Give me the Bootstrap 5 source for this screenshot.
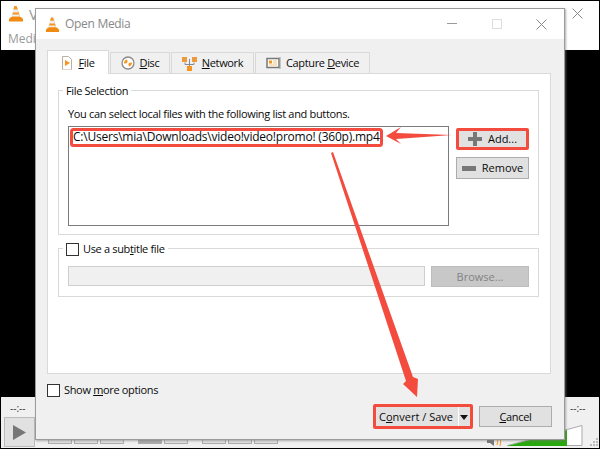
<!DOCTYPE html>
<html lang="en">
<head>
<meta charset="utf-8">
<title>Open Media</title>
<link rel="stylesheet" href="https://cdn.jsdelivr.net/npm/bootstrap@5.3.0/dist/css/bootstrap.min.css">
<style>
html,body{margin:0;width:600px;height:449px;overflow:hidden;background:#000}
body{position:relative;font-family:"Open Sans","Noto Sans",sans-serif;font-size:11px;letter-spacing:-.33px;line-height:16px;color:#0a0a0a}
u{text-underline-offset:1px}
.backtop{position:absolute;left:1px;top:1px;width:598px;height:49px;background:#fff;color:#999;letter-spacing:0}
.backtop .cone1{position:absolute;left:7px;top:4px}
.backtop .ttl{position:absolute;left:28px;top:5px;font-size:15px}
.backtop .menu{position:absolute;left:7px;top:30px;font-size:12px}
.backtop .cls{position:absolute;left:571px;top:7px}
.backbot{position:absolute;left:1px;top:397px;width:598px;height:51px;background:#f0f0f0;color:#333;letter-spacing:0}
.backbot .t1{position:absolute;left:9px;top:3px;font-size:10px}
.backbot .t2{position:absolute;left:569px;top:3px;font-size:10px}
.playb{position:absolute;left:3px;top:20px;width:31px;height:30px;background:#e1e1e1;border:1px solid #bbb;display:flex;align-items:center;justify-content:center}
.minib{position:absolute;top:42px;width:24px;height:5px;background:#e1e1e1;border:1px solid #adadad}
.vol{position:absolute;left:506px;top:28px}
.spk{position:absolute;left:486px;top:40px}
.grip{position:absolute;left:589px;top:41px}
.dlg{position:absolute;left:35px;top:8px;width:530px;height:432px;background:#f0f0f0;border:1px solid #9a9a9a;box-shadow:1px 1px 2px rgba(120,120,120,.6);display:flex;flex-direction:column}
.dlg-title{height:30px;background:#fff;flex:none;color:#888;font-size:12px;letter-spacing:-.3px;padding:0 0 0 9px;gap:5px}
.wctl{margin-left:auto;gap:0}
.wctl span{width:45px;height:30px;display:flex;align-items:center;justify-content:center}
.dlg-main{flex:1;padding:11px 13px 0 11px;position:relative}
.tabsrow{height:23px;gap:1px;flex-wrap:nowrap;border:0;margin:0;position:relative;z-index:1}
.tb{height:21px;margin-top:2px;background:#f0f0f0;border:1px solid #d9d9d9;border-bottom:0;display:flex;align-items:center;gap:5px;justify-content:center;color:#0a0a0a;white-space:nowrap}
.tb.on{height:24px;margin-top:0;background:#fff;border-color:#d9d9d9}
.panel{height:301px;background:#fff;border:1px solid #d9d9d9;padding:16px 11px 0 10px;margin-top:0}
.grp{border:1px solid #d9d9d9;position:relative}
.grp1{height:145px;padding:15px 9px 0}
.grp2{height:49px;margin-top:13px;padding:17px 9px 0}
.lgd{position:absolute;left:4px;top:-8px;background:#fff;padding:0 3px;display:flex;align-items:center;gap:4px}
.lst{width:381px;height:100px;flex:none;border:1px solid #7a7a7f;margin-top:4px;padding:2px 0 0 4px;font-size:12px;letter-spacing:-.22px;white-space:nowrap}
.side{gap:7px;width:73px;padding-top:6px}
.wbtn{background:#e1e1e1;border:1px solid #adadad;border-radius:0;font-size:11px;letter-spacing:0;line-height:16px;padding:0;color:#0a0a0a;display:flex;align-items:center;justify-content:center;gap:6px;width:73px;height:22px}
.hl{border:3px solid #f44b3f;border-radius:2px}
.chk{width:13px;height:13px;flex:none;background:#fff;border:1px solid #333;display:block}
.subin{width:357px;height:20px;background:#f0f0f0;border:1px solid #cfcfcf}
.brw{width:98px;height:21px;background:#c8c8c8;border-color:#bdbdbd;color:#838383}
.more{margin-top:8px;gap:4px}
.foot{position:absolute;left:0;right:0;top:365px;padding:0 12px 0 337px;gap:6px}
.conv{width:100px;height:25px;flex:none;justify-content:flex-start;padding-left:3px;position:relative}
.conv .sep{position:absolute;right:11px;top:0;bottom:0;border-left:1px solid #fff}
.conv .car{position:absolute;right:2px;top:8px;width:0;height:0;border:4px solid transparent;border-top:5px solid #111;border-bottom:0}
.can{width:73px;height:21px;flex:none;margin-top:2px;letter-spacing:-.3px}
.arrows{position:absolute;left:0;top:0;pointer-events:none}
</style>
</head>
<body>
<div class="backtop">
  <svg class="cone1" width="16" height="17" viewBox="0 0 16 17"><path d="M6.300 1h2.400l3.800 12h-9z" fill="#f7941d"/><path d="M5.300 4.500h4.400l.9 3H4.400z" fill="#eee"/><path d="M3.800 9.500h7.400l.7 2H3.100z" fill="#eee"/><path d="M3 12h10l2 2v2.500H1V14z" fill="#f08a12"/></svg>
  <span class="ttl">V</span>
  <span class="menu">Medi</span>
  <svg class="cls" width="11" height="11"><path d="M.5.5l10 10M10.500.5l-10 10" stroke="#888" fill="none"/></svg>
</div>
<div class="backbot">
  <span class="t1">--:--</span><span class="t2">--:--</span>
  <div class="playb"><svg width="15" height="17"><path d="M1 1l13 7.500L1 16z" fill="#777"/></svg></div>
  <i class="minib" style="left:47px"></i><i class="minib" style="left:73px"></i><i class="minib" style="left:99px"></i>
  <i class="minib" style="left:137px;background:#aaa"></i><i class="minib" style="left:163px"></i>
  <i class="minib" style="left:201px"></i><i class="minib" style="left:227px"></i><i class="minib" style="left:253px"></i>
  <svg class="spk" width="16" height="9"><path d="M0 2h3l4-2v9L3 6H0z" fill="#777"/><path d="M9 1q3 3 1 7M12 0q3 4 1 9" stroke="#f7941d" fill="none"/></svg>
  <svg class="vol" width="76" height="21"><path d="M.5 20.500L75 .5v20z" fill="#fff" stroke="#aaa"/><path d="M0 21L60 5V21z" fill="#2aa80f"/></svg>
  <svg class="grip" width="8" height="8"><path d="M6 0h2v2H6zM3 3h2v2H3zM6 3h2v2H6zM0 6h2v2H0zM3 6h2v2H3zM6 6h2v2H6z" fill="#bbb"/></svg>
</div>

<div class="dlg">
  <div class="dlg-title d-flex align-items-center">
    <svg width="15" height="17" viewBox="0 0 16 17"><path d="M6.300 1h2.400l3.800 12h-9z" fill="#f7941d"/><path d="M5.300 4.500h4.400l.9 3H4.400z" fill="#eee"/><path d="M3.800 9.500h7.400l.7 2H3.100z" fill="#eee"/><path d="M3 12h10l2 2v2.500H1V14z" fill="#f08a12"/></svg>
    <span>Open Media</span>
    <div class="wctl d-flex">
      <span><svg width="10" height="2"><path d="M0 .5h10" stroke="#999"/></svg></span>
      <span><svg width="10" height="10"><rect x=".5" y=".5" width="9" height="9" fill="none" stroke="#ddd"/></svg></span>
      <span><svg width="11" height="11"><path d="M.5.5l10 10M10.500.5l-10 10" stroke="#888" fill="none"/></svg></span>
    </div>
  </div>
  <div class="dlg-main">
    <div class="tabsrow d-flex">
      <div class="tb on" style="width:62px"><svg width="12" height="15"><path d="M1.500 1.500h6l3 3v9.500a1 1 0 0 1-1 1h-7a1 1 0 0 1-1-1z" fill="#fff" stroke="#b9b0a4"/><path d="M4 5l5 3-5 3z" fill="#f7941d"/></svg><span><u>F</u>ile</span></div>
      <div class="tb" style="width:60px"><svg width="14" height="14"><circle cx="7" cy="7" r="6" fill="#fff" stroke="#8a8a8a" stroke-width="1.300"/><path d="M3 7.500a4 4 0 0 1 3-4l.7 2.500a1.500 1.500 0 0 0-1 1.300zM11 6.500a4 4 0 0 1-3 4l-.7-2.500a1.500 1.500 0 0 0 1-1.300z" fill="#f7941d"/></svg><span><u>D</u>isc</span></div>
      <div class="tb" style="width:83px"><svg width="15" height="15"><path d="M7.500 3v8M3 6.500V8.500h9V6.500" stroke="#8a8a8a" fill="none"/><path d="M0 1h5v5H0zM10 1h5v5h-5z" fill="#ec9a3e"/><path d="M5 10h5v5H5z" fill="#f7941d"/></svg><span><u>N</u>etwork</span></div>
      <div class="tb" style="width:115px"><svg width="15" height="14"><path d="M1 2.500h12v9H1z" fill="#fff" stroke="#777" stroke-width="1.500"/><path d="M14 1v12" stroke="#999"/><path d="M3 4.500h3v3H3z" fill="#f7941d"/><path d="M7 5h4M7 7h4M3 9h8" stroke="#f5c27c"/></svg><span>Capture <u>D</u>evice</span></div>
    </div>
    <div class="panel">
      <div class="grp grp1">
        <div class="lgd">File Selection</div>
        <div>You can select local files with the following list and buttons.</div>
        <div class="d-flex" style="gap:7px">
          <div class="lst">C:\Users\mia\Downloads\video!video!promo! (360p).mp4</div>
          <div class="side d-flex flex-column">
            <button type="button" class="wbtn hl"><svg width="14" height="14"><path d="M5 0h4v5h5v4H9v5H5V9H0V5h5z" fill="#777"/></svg>Add...</button>
            <button type="button" class="wbtn"><svg width="14" height="5"><path d="M0 0h14v5H0z" fill="#777"/></svg>Remove</button>
          </div>
        </div>
      </div>
      <div class="grp grp2">
        <div class="lgd"><i class="chk"></i><span>Use a sub<u>t</u>itle file</span></div>
        <div class="d-flex align-items-start" style="gap:6px">
          <div class="subin"></div>
          <button type="button" class="wbtn brw" disabled>Browse...</button>
        </div>
      </div>
    </div>
    <div class="more d-flex align-items-center"><i class="chk"></i><span>Show <u>m</u>ore options</span></div>
    <div class="foot d-flex align-items-start">
      <button type="button" class="wbtn conv hl"><span>C<u>o</u>nvert / Save</span><span class="sep"></span><span class="car"></span></button>
      <button type="button" class="wbtn can"><span><u>C</u>ancel</span></button>
    </div>
  </div>
</div>

<svg class="arrows" width="600" height="449">
  <rect x="71.500" y="129.500" width="310" height="16" rx="2" fill="none" stroke="#f44b3f" stroke-width="3"/>
  <path d="M386 136L401 127 396 133 452 135 396 139 401 144z" fill="#f44b3f"/>
  <path d="M331 153L333 152 413 377 418 379 417 397 403 384 406 381z" fill="#f44b3f"/>
</svg>
</body>
</html>
